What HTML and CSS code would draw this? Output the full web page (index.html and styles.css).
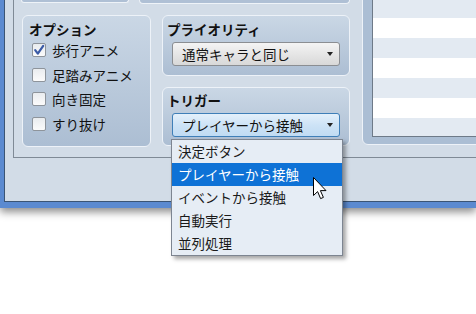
FILE: index.html
```html
<!DOCTYPE html>
<html lang="ja">
<head>
    <meta charset="UTF-8">
    <title>イベント設定</title>
    <link rel="stylesheet" href="styles.css">
</head>
<body>
    <div class="screen">
        <div class="window">
            <div class="client">
                <div class="panel">
                    <div class="stubs">
                        <div class="stub stub-left"></div>
                        <div class="stub stub-right"></div>
                    </div>

                    <div class="groups">
                        <!-- Options -->
                        <section class="group options">
                            <h3 class="group-title">オプション</h3>
                            <label class="check-row">
                                <span class="checkbox">
                                    <svg width="14" height="14" viewBox="0 0 14 14"><path d="M3.2 7.2 L5.8 10.6 L11.2 2.8" fill="none" stroke="#3a5aa6" stroke-width="2.2" stroke-linecap="round" stroke-linejoin="round"/></svg>
                                </span>
                                歩行アニメ
                            </label>
                            <label class="check-row"><span class="checkbox"></span>足踏みアニメ</label>
                            <label class="check-row"><span class="checkbox"></span>向き固定</label>
                            <label class="check-row"><span class="checkbox"></span>すり抜け</label>
                        </section>

                        <div class="column">
                            <section class="group priority">
                                <h3 class="group-title">プライオリティ</h3>
                                <div class="combo">
                                    <span>通常キャラと同じ</span>
                                    <span class="arrow"></span>
                                </div>
                            </section>

                            <section class="group trigger">
                                <h3 class="group-title">トリガー</h3>
                                <div class="combo focused">
                                    <span>プレイヤーから接触</span>
                                    <span class="arrow"></span>
                                </div>
                            </section>
                        </div>

                        <!-- Event list -->
                        <section class="group list-group">
                            <div class="listbox"></div>
                        </section>
                    </div>
                </div>
            </div>
        </div>

        <ul class="dropdown">
            <li>決定ボタン</li>
            <li class="selected">プレイヤーから接触</li>
            <li>イベントから接触</li>
            <li>自動実行</li>
            <li>並列処理</li>
        </ul>

        <svg class="cursor" width="14" height="23" viewBox="0 0 14 23">
            <path d="M0.5 0.5 L0.5 18.5 L4.6 14.6 L7.6 21.6 L10.4 20.4 L7.4 13.6 L13 13.6 Z" fill="#fff" stroke="#000" stroke-width="1" stroke-linejoin="round"/>
        </svg>
    </div>
</body>
</html>
```

FILE: styles.css
```css
body {
    margin: 0;
    background: #fff;
    color: #111;
    font-family: "Noto Sans CJK JP", "Noto Sans", sans-serif;
    font-size: 13.5px;
}

.screen {
    position: relative;
    width: 476px;
    height: 314px;
    overflow: hidden;
}

/* Window frame */
.window {
    height: 202px;
    border-left: 4px solid #5b8ad0;
    border-bottom: 6px solid #5b8ad0;
    box-shadow: 0 4px 8px rgba(0, 0, 0, 0.45);
}

.client {
    height: 201px;
    padding-left: 8px;
    background: #d2dce7;
    border-left: 1px solid #3a5474;
    border-bottom: 1px solid #3a5474;
}

.panel {
    height: 157px;
    padding-left: 7px;
    border-left: 1px solid #7f8a96;
    border-bottom: 1px solid #7f8a96;
    overflow: hidden;
}

.stubs {
    display: flex;
    height: 4px;
}

.stub {
    flex-shrink: 0;
    height: 4px;
    box-sizing: border-box;
    background: #afc0d5;
    border: 1px solid #eef3f8;
    border-top: none;
    border-radius: 0 0 5px 5px;
}

.stub-left {
    width: 108px;
    margin-right: 10px;
    height: 3px;
}

.stub-right {
    width: 211px;
}

/* Group boxes */
.groups {
    display: flex;
    align-items: flex-start;
    margin-top: 11px;
    padding-left: 1px;
}

.group {
    flex-shrink: 0;
    box-sizing: border-box;
    background: linear-gradient(#cad7e5, #acbed3);
    border: 1px solid #edf2f8;
    border-radius: 6px;
}

.group-title {
    margin: 0;
    font-size: 13.5px;
    font-weight: bold;
    line-height: 16px;
}

.options {
    width: 129px;
    height: 132px;
    padding: 5px 0 0 6px;
}

.options .group-title {
    margin-bottom: 1px;
}

.check-row {
    display: flex;
    align-items: center;
    gap: 6px;
    height: 24.5px;
    padding-left: 3px;
}

.checkbox {
    display: flex;
    width: 14px;
    height: 14px;
    box-sizing: border-box;
    border: 1px solid #8e949b;
    border-radius: 2px;
    background: linear-gradient(#e9ecef, #fbfbfb);
}

.checkbox svg {
    margin: -1px;
}

.column {
    display: flex;
    flex-direction: column;
    flex-shrink: 0;
    gap: 11px;
    width: 188px;
    margin-left: 11px;
}

.priority {
    height: 61px;
    padding: 5px 0 0 4px;
}

.trigger {
    height: 59px;
    padding: 4px 0 0 4px;
}

.combo {
    display: flex;
    align-items: center;
    justify-content: space-between;
    box-sizing: border-box;
    width: 168px;
    height: 24px;
    margin: 5px 0 0 5px;
    padding: 0 6px 0 9px;
    border: 1px solid #8b8e92;
    border-radius: 3px;
    background: linear-gradient(#f4f4f4, #e6e6e6 50%, #d8d8d8);
    line-height: 20px;
}

.combo.focused {
    border-color: #3f7fb8;
    background: linear-gradient(#e4f0fb, #cde3f6 50%, #c0dbf3);
}

.arrow {
    width: 0;
    height: 0;
    border-left: 3.5px solid transparent;
    border-right: 3.5px solid transparent;
    border-top: 4px solid #222;
}

.list-group {
    width: 150px;
    height: 155px;
    margin: -25px 0 0 12px;
    padding: 0 0 7px 9px;
    background: #abbed4;
    display: flex;
    flex-direction: column;
    justify-content: flex-end;
}

.listbox {
    height: 147px;
    box-sizing: border-box;
    border-left: 1px solid #6e7a88;
    border-bottom: 1px solid #6e7a88;
    background: repeating-linear-gradient(to bottom, #e3eaf2 0 20px, #fff 20px 40px);
    background-position: 0 7px;
}

/* Open dropdown */
.dropdown {
    position: absolute;
    left: 171px;
    top: 139px;
    width: 172px;
    box-sizing: border-box;
    margin: 0;
    padding: 0;
    list-style: none;
    background: #e6edf5;
    border: 1px solid #7d8591;
    box-shadow: 3px 3px 4px rgba(0, 0, 0, 0.35);
}

.dropdown li {
    height: 23px;
    line-height: 23px;
    padding-left: 6px;
    color: #1a1a1a;
}

.dropdown li.selected {
    background: #0e72d6;
    color: #fff;
}

.cursor {
    position: absolute;
    left: 313px;
    top: 177px;
}
```
